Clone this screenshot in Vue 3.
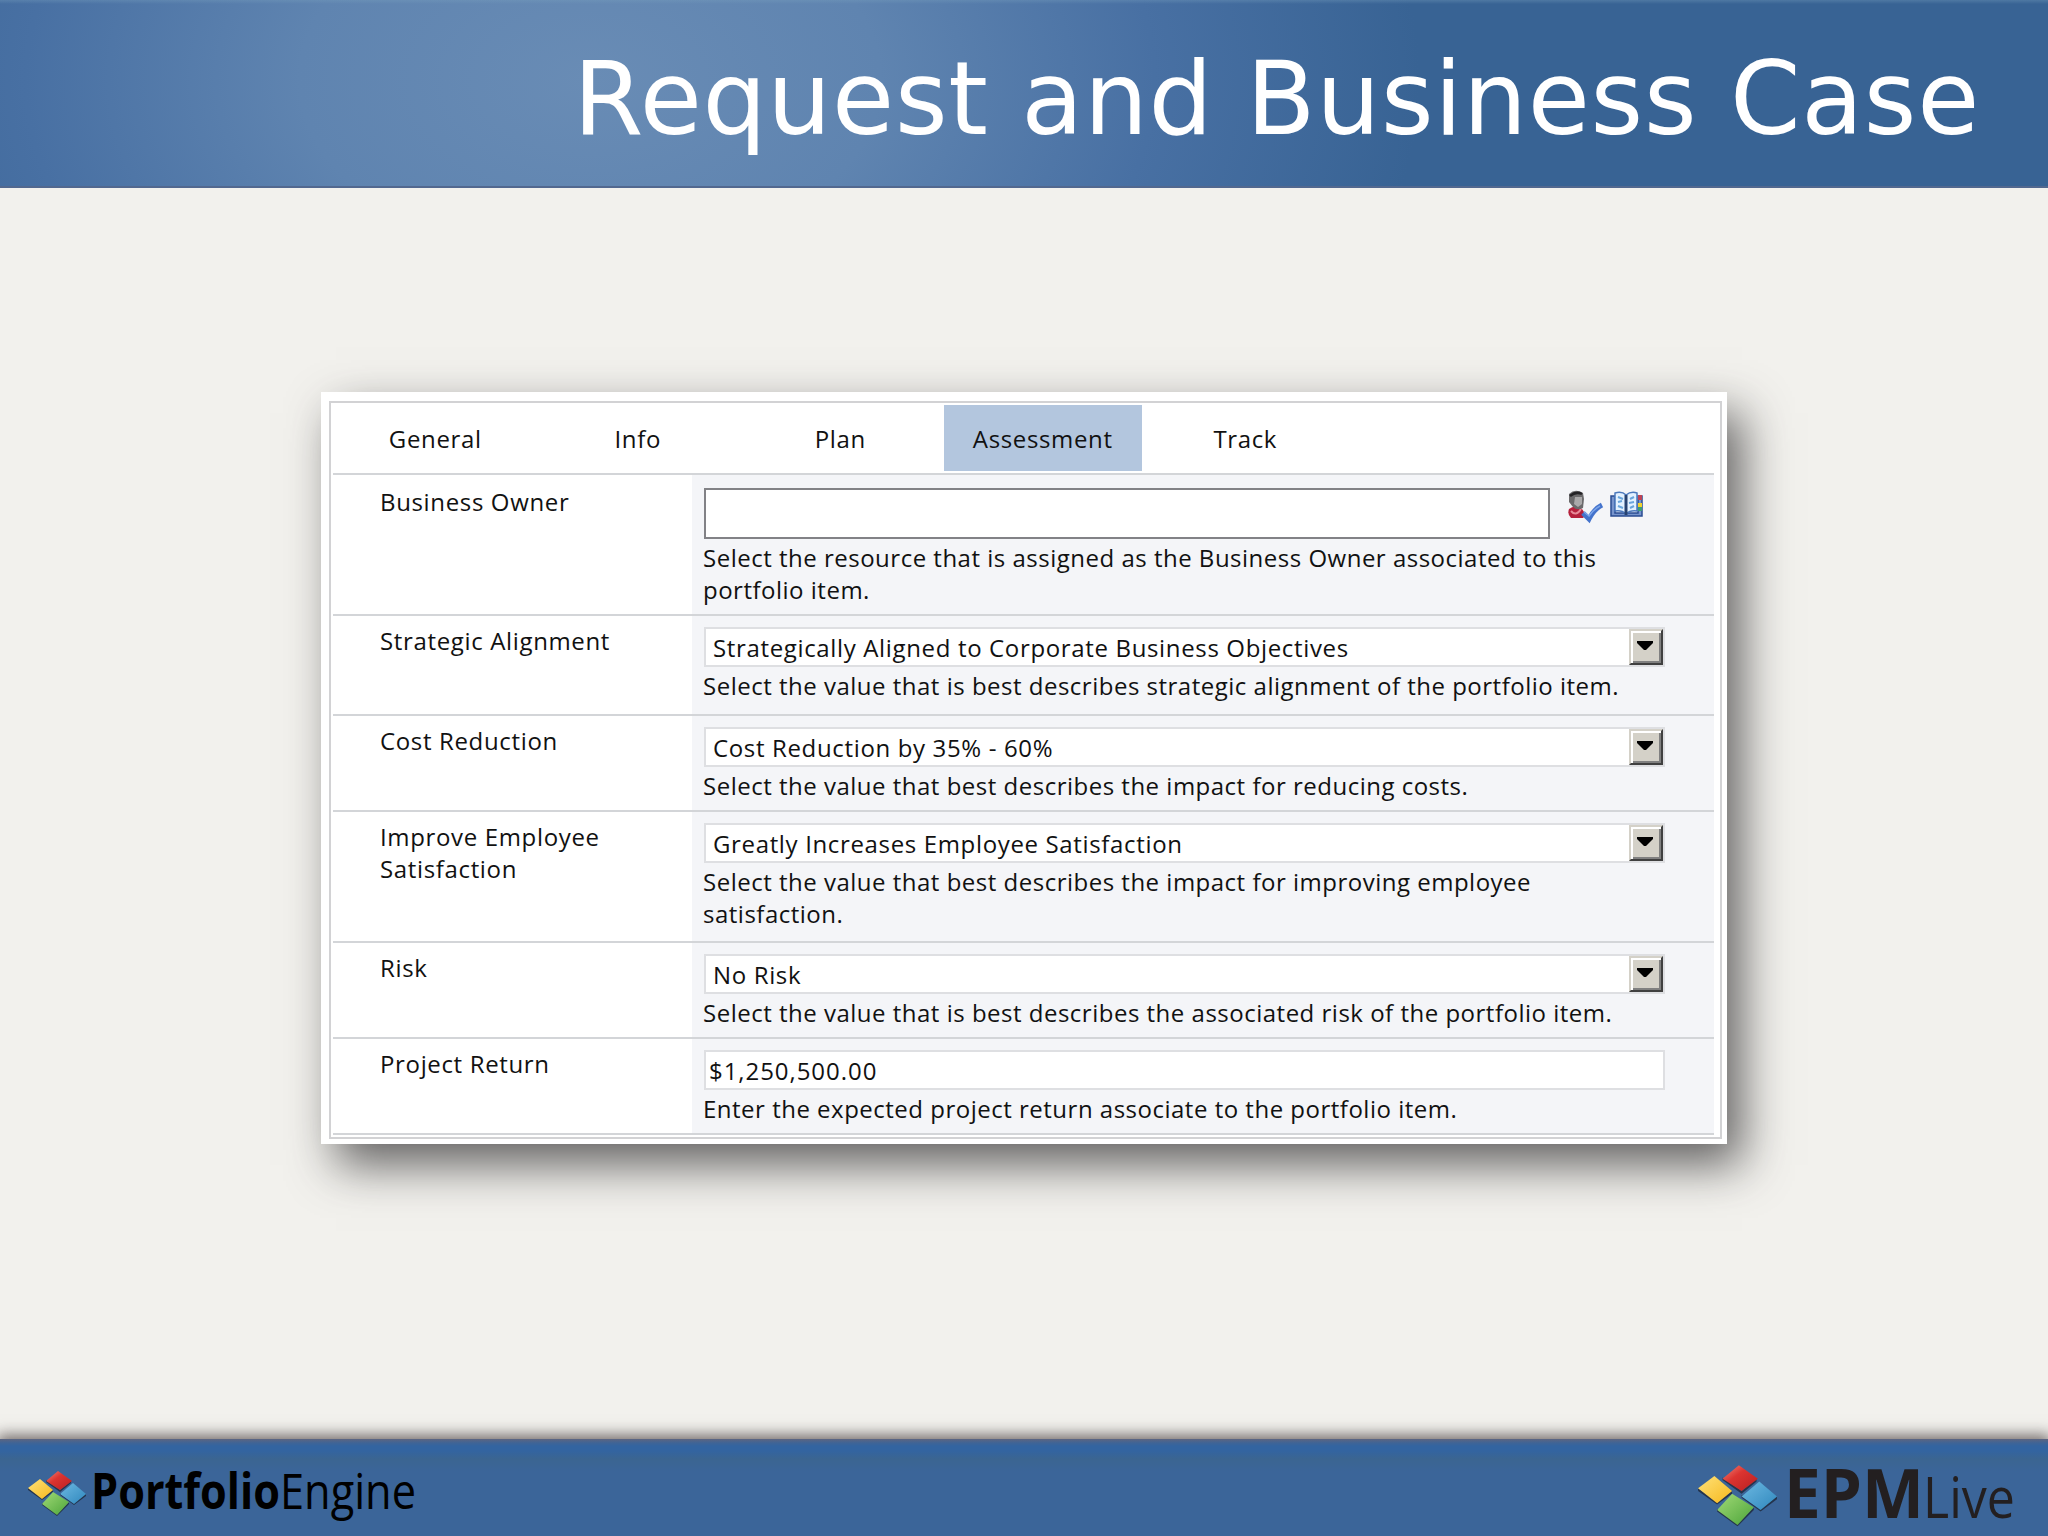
<script setup>
import { ref, reactive } from 'vue'

const tabs = ['General', 'Info', 'Plan', 'Assessment', 'Track']
const active = ref('Assessment')

const rows = reactive([
  {
    id: 'owner',
    label: ['Business Owner'],
    type: 'people',
    value: '',
    help: ['Select the resource that is assigned as the Business Owner associated to this', 'portfolio item.'],
  },
  {
    id: 'alignment',
    label: ['Strategic Alignment'],
    type: 'select',
    value: 'Strategically Aligned to Corporate Business Objectives',
    help: ['Select the value that is best describes strategic alignment of the portfolio item.'],
  },
  {
    id: 'cost',
    label: ['Cost Reduction'],
    type: 'select',
    value: 'Cost Reduction by 35% - 60%',
    help: ['Select the value that best describes the impact for reducing costs.'],
  },
  {
    id: 'satisfaction',
    label: ['Improve Employee', 'Satisfaction'],
    type: 'select',
    value: 'Greatly Increases Employee Satisfaction',
    help: ['Select the value that best describes the impact for improving employee', 'satisfaction.'],
  },
  {
    id: 'risk',
    label: ['Risk'],
    type: 'select',
    value: 'No Risk',
    help: ['Select the value that is best describes the associated risk of the portfolio item.'],
  },
  {
    id: 'return',
    label: ['Project Return'],
    type: 'text',
    value: '$1,250,500.00',
    help: ['Enter the expected project return associate to the portfolio item.'],
  },
])
</script>

<template>
  <div class="slide">
    <header class="header">
      <h1>Request and Business Case</h1>
    </header>

    <main class="main">
      <div class="panel">
        <div class="form">
          <nav class="tabs">
            <div v-for="tab in tabs" :key="tab" class="tab" :class="{ active: tab === active }" @click="active = tab">
              {{ tab }}
            </div>
          </nav>
          <div v-for="row in rows" :key="row.id" class="row" :class="row.id">
            <div class="label">
              <div v-for="line in row.label" :key="line">{{ line }}</div>
            </div>
            <div class="field">
              <div v-if="row.type === 'people'" class="people">
                <div class="people-box">{{ row.value }}</div>
                <svg class="check-icon" width="36" height="34" viewBox="0 0 36 34">
                  <path d="M1 19q6-5 13 0l4 6-3 3H3q-4-4-2-9z" fill="#b5203c" />
                  <path d="M3 21q5 6 10-2" fill="none" stroke="#e78a98" stroke-width="2" />
                  <path d="M1 4q6-6 14-1l1 6-1 9q-6 3-10-1L1 12z" fill="#6b6a6c" />
                  <path d="M7 7h7v7l-4 3-4-3z" fill="#aaa9aa" />
                  <path d="M2 6q6-5 12-2" fill="none" stroke="#242326" stroke-width="2.5" />
                  <path d="M15 23l6 6q5-10 13-14" fill="none" stroke="#4473cc" stroke-width="5" />
                  <path d="M16 22l5 4q5-7 11-10" fill="none" stroke="#7ba5ea" stroke-width="1.5" />
                </svg>
                <svg class="book-icon" width="33" height="28" viewBox="0 0 33 28">
                  <path d="M1 5h4v17h23V5h4v20H1z" fill="#7794cc" stroke="#294b91" stroke-width="1.5" />
                  <path d="M5 2q7-2 11 2 5-4 11-2v18q-7-1-11 3-4-4-11-3z" fill="#e3f1ff" stroke="#4c79bd" stroke-width="1.5" />
                  <path d="M16 4v20" stroke="#274270" stroke-width="3" />
                  <path d="M8 6l5 2M8 11l4-1M8 15l5 2M20 8l4-2M19 12l5-1M20 17l4-2" stroke="#69a5dc" stroke-width="2" />
                  <path d="M28 4h4v5h-4z" fill="#bd4355" />
                  <path d="M28 12h4v4h-4z" fill="#f0d22c" />
                  <path d="M28 16h4v4h-4z" fill="#3b9d78" />
                </svg>
              </div>
              <div v-else class="control" :class="row.type">
                <span class="value">{{ row.value }}</span>
                <span v-if="row.type === 'select'" class="arrow">
                  <svg width="16" height="10" viewBox="0 0 16 10"><path d="M0 0h16v2L9 9H7L0 2z" /></svg>
                </span>
              </div>
              <div class="help">
                <div v-for="line in row.help" :key="line">{{ line }}</div>
              </div>
            </div>
          </div>
        </div>
      </div>
    </main>

    <footer class="footer">
      <svg width="440" height="97" viewBox="0 -1 440 97">
        <defs>
          <linearGradient id="red" x1="0" y1="0" x2="1" y2="1">
            <stop offset="0" stop-color="#f08a7c" /><stop offset=".4" stop-color="#dc3430" /><stop offset="1" stop-color="#b81f22" />
          </linearGradient>
          <linearGradient id="yellow" x1="0" y1="0" x2="1" y2="1">
            <stop offset="0" stop-color="#ffe27a" /><stop offset="1" stop-color="#f6b81c" />
          </linearGradient>
          <linearGradient id="blue" x1="0" y1="0" x2="1" y2="1">
            <stop offset="0" stop-color="#6db9e2" /><stop offset="1" stop-color="#2f87bd" />
          </linearGradient>
          <linearGradient id="green" x1="0" y1="0" x2="1" y2="1">
            <stop offset="0" stop-color="#a1da76" /><stop offset="1" stop-color="#4ca43a" />
          </linearGradient>
        </defs>
        <g id="tiles">
          <path d="M46 40l14 10 11-9v2L60 52l-14-10zM28 48l14 10 11-8v2L42 60 28 50zM60 53l14 10 12-9v2L74 65l-14-10zM42 63l15 11 12-12v2L57 76 42 65z" fill="#24344d" />
          <path d="M58 31l14 10-12 9-14-9z" fill="url(#red)" />
          <path d="M40 39l13 11-11 9-14-11z" fill="url(#yellow)" />
          <path d="M73 43l13 11-12 10-14-10z" fill="url(#blue)" />
          <path d="M53 52l16 10-12 13-15-11z" fill="url(#green)" />
        </g>
        <text x="91" y="69" font-size="50" font-weight="700" textLength="189" lengthAdjust="spacingAndGlyphs">Portfolio</text>
        <text x="280" y="69" font-size="50" textLength="136" lengthAdjust="spacingAndGlyphs">Engine</text>
      </svg>
      <svg width="360" height="97" viewBox="0 -1 360 97" class="epm">
        <use href="#tiles" transform="translate(-28 -17) scale(1.36)" />
        <text x="96" y="78" font-size="68" font-weight="700" textLength="140" lengthAdjust="spacingAndGlyphs">EPM</text>
        <text x="235" y="78" font-size="56" textLength="92" lengthAdjust="spacingAndGlyphs">Live</text>
      </svg>
    </footer>
  </div>
</template>

<style>
body {
  margin: 0;
}
</style>

<style scoped>
.slide {
  width: 2048px;
  height: 1536px;
  display: flex;
  flex-direction: column;
  background: #f2f1ed;
  overflow: hidden;
}

.header {
  height: 188px;
  box-sizing: border-box;
  padding: 0 68px 0 0;
  display: flex;
  justify-content: flex-end;
  border-bottom: 2px solid #52688f;
  background:
    linear-gradient(rgba(120, 160, 190, .35), transparent 4px),
    radial-gradient(ellipse 830px 520px at 590px 80px, #698cb5 0%, #5f84b0 35%, #4870a3 68%, #386394 100%);
}

.header h1 {
  margin: 0;
  color: white;
  font-family: "DejaVu Sans", sans-serif;
  font-weight: normal;
  font-size: 101px;
  line-height: 198px;
  letter-spacing: .7px;
  white-space: nowrap;
}

.main {
  flex: 1;
  padding: 204px 0 0 321px;
}

.panel {
  width: 1406px;
  height: 752px;
  box-sizing: border-box;
  padding: 9px 5px 5px 8px;
  background: white;
  box-shadow: 15px 21px 44px rgba(50, 48, 50, .74);
}

.form {
  height: 738px;
  box-sizing: border-box;
  border: 2px solid #d2d2d4;
  padding: 0 6px 0 2px;
  font-family: "Open Sans", sans-serif;
  font-size: 24px;
  letter-spacing: .65px;
  line-height: 32px;
  color: #111;
}

.tabs {
  display: flex;
  gap: 4px;
  height: 70px;
  padding: 2px 0 0 3px;
  box-sizing: border-box;
}

.tab {
  width: 198.5px;
  height: 66px;
  line-height: 67px;
  text-align: center;
}

.tab.active {
  background: #b3c6de;
}

.row {
  display: grid;
  grid-template-columns: 359px 1fr;
  height: 96px;
  box-sizing: border-box;
  border-top: 2px solid #d3d5d8;
}

.row.owner {
  height: 141px;
}

.row.alignment {
  height: 100px;
}

.row.satisfaction {
  height: 131px;
}

.row.return {
  height: 98px;
  border-bottom: 2px solid #d3d5d8;
}

.label {
  padding: 9px 0 0 47px;
  white-space: nowrap;
}

.owner .label {
  padding-top: 11px;
}

.field {
  background: #f4f5f8;
  padding: 11px 0 0 12px;
}

.owner .field {
  padding-top: 13px;
}

.people {
  display: flex;
}

.people-box {
  width: 846px;
  height: 51px;
  box-sizing: border-box;
  border: 2px solid #828286;
  background: white;
}

.check-icon {
  margin: 2px 0 0 18px;
}

.book-icon {
  margin: 3px 0 0 6px;
}

.control {
  display: flex;
  justify-content: space-between;
  width: 961px;
  height: 40px;
  box-sizing: border-box;
  border: 2px solid #dedfe2;
  background: white;
}

.value {
  padding-left: 7px;
  line-height: 38px;
  white-space: nowrap;
}

.text .value {
  padding-left: 3px;
  letter-spacing: .95px;
}

.arrow {
  width: 34px;
  height: 36px;
  box-sizing: border-box;
  background: #d4d1c8;
  border: 2px solid #d4d1c8;
  border-right-color: #404040;
  border-bottom-color: #404040;
  box-shadow: inset 2px 2px white, inset -2px -2px #808080;
  display: flex;
  align-items: center;
  justify-content: center;
}

.arrow svg {
  margin: 0 2px 2px 0;
}

.help {
  margin: 3px 0 0 -1px;
  letter-spacing: .5px;
  white-space: nowrap;
}

.footer {
  height: 97px;
  display: flex;
  justify-content: space-between;
  background: linear-gradient(#5d6580 0, #3f6496 4px, #3364a0 7px, #3364a0 12px, #3b6591 20px, #3b6599 32px);
  box-shadow: 0 -1px 14px 3px rgba(70, 60, 60, .75);
  font-family: "Open Sans", sans-serif;
}

.footer svg {
  overflow: visible;
}

.epm {
  fill: #231f20;
}
</style>
